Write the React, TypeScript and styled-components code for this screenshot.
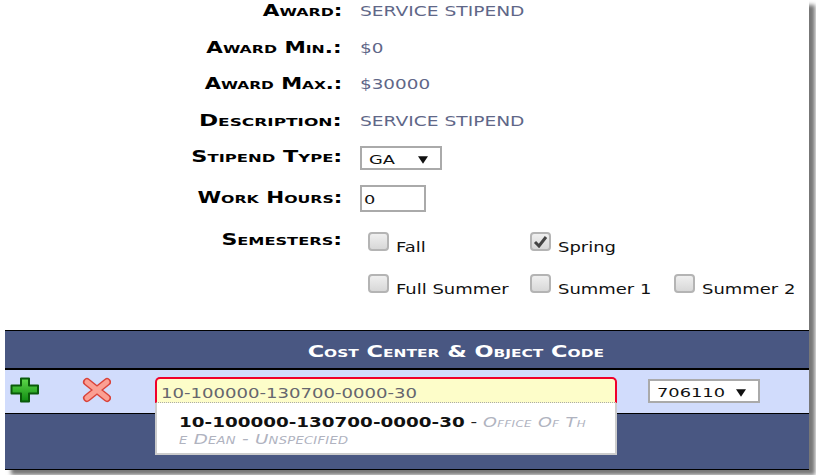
import React from "react";
import styled, { createGlobalStyle } from "styled-components";

const Global = createGlobalStyle`
  html, body { margin: 0; padding: 0; background: #fff; overflow: hidden; }
  body { width: 816px; height: 475px; font-family: "DejaVu Sans", Verdana, sans-serif; }
`;

const Page = styled.div`
  width: 816px;
  height: 475px;
  overflow: hidden;
  display: flex;
  flex-direction: column;
  background: #fff;
`;

const Sheet = styled.div`
  width: 804px;
  height: 470px;
  margin-left: 5px;
  background: #fff;
  box-shadow: 6px 5px 4px #777;
  display: flex;
  flex-direction: column;
`;

/* The reference photo is stretched horizontally, so its text is too. */
const Wide = styled.span<{ $x: number; $origin?: string }>`
  display: inline-block;
  white-space: nowrap;
  transform: scaleX(${(p) => p.$x});
  transform-origin: ${(p) => p.$origin ?? "left"} center;
`;

const Form = styled.div`
  height: 330px;
  flex: none;
  display: grid;
  grid-template-columns: 337px 1fr;
  grid-template-rows: 22px 37px 36px 36px 39px 40px auto;
  column-gap: 18px;
  align-content: start;
`;

const Label = styled.div<{ $top: number }>`
  font-size: 15px;
  font-weight: 700;
  font-variant: small-caps;
  color: #000;
  text-align: right;
  line-height: 18px;
  padding-top: ${(p) => p.$top}px;
  white-space: nowrap;
`;

const Value = styled.div<{ $top: number }>`
  font-size: 13.5px;
  color: #5f6788;
  line-height: 18px;
  padding-top: ${(p) => p.$top}px;
  white-space: nowrap;
`;

const Cell = styled.div<{ $top: number }>`
  padding-top: ${(p) => p.$top}px;
`;

const SelectBox = styled.div<{ $w: number }>`
  box-sizing: border-box;
  width: ${(p) => p.$w}px;
  height: 24px;
  border: 2px solid #aaa;
  background: #fff;
  font-size: 13px;
  line-height: 20px;
  color: #111;
  display: flex;
  align-items: center;
  justify-content: space-between;
  padding: 3px 12px 0 7px;
`;

const Arrow = styled.svg`
  width: 10px;
  height: 8px;
  flex: none;
`;

const HoursInput = styled.div`
  box-sizing: border-box;
  width: 66px;
  height: 27px;
  border: 2px solid #aaa;
  font-size: 13px;
  line-height: 25px;
  padding-left: 2px;
  color: #111;
`;

const Semesters = styled.div`
  display: grid;
  grid-template-columns: 162px 144px auto;
  grid-template-rows: 42px 30px;
  margin-left: 8px;
  padding-top: 8px;
`;

const Check = styled.label`
  display: flex;
  align-items: flex-start;
  gap: 7px;
  font-size: 13.5px;
  color: #111;
  white-space: nowrap;
`;

const Box = styled.span`
  box-sizing: border-box;
  width: 21px;
  height: 19px;
  border: 2px solid #b4b4b4;
  border-radius: 4px;
  background: linear-gradient(#efefef, #d8d8d8);
  display: flex;
  align-items: center;
  justify-content: center;
  flex: none;
`;

const CheckText = styled.span`
  line-height: 16px;
  padding-top: 7px;
`;

const Tick = styled.svg`
  width: 15px;
  height: 13px;
`;

const HeaderBar = styled.div`
  height: 40px;
  flex: none;
  box-sizing: border-box;
  background: #495782;
  border-top: 1px solid #000;
  border-bottom: 2px solid #000;
  color: #fff;
  font-weight: 700;
  font-variant: small-caps;
  font-size: 16px;
  text-align: center;
  line-height: 41px;
  padding-left: 98px;
`;

const Row = styled.div`
  height: 44px;
  flex: none;
  box-sizing: border-box;
  background: #d1dcfc;
  border-bottom: 1px solid #000;
  display: flex;
  align-items: flex-start;
`;

const IconSlot = styled.div<{ $w: number; $left: number }>`
  width: ${(p) => p.$w}px;
  margin-left: ${(p) => p.$left}px;
  padding-top: 7px;
  flex: none;
  display: flex;
`;

const ComboWrap = styled.div`
  position: relative;
  margin-left: 44px;
  margin-top: 7px;
  width: 462px;
  flex: none;
`;

const ComboInput = styled.div`
  box-sizing: border-box;
  height: 26px;
  background: #fdfdc9;
  border: 2px solid #f0002a;
  border-bottom: 1px dotted #aaa;
  border-radius: 5px 5px 0 0;
  font-size: 14px;
  line-height: 24px;
  padding: 2px 0 0 4px;
  color: #66666e;
  white-space: nowrap;
`;

const Dropdown = styled.div`
  position: absolute;
  left: 0;
  top: 26px;
  box-sizing: border-box;
  width: 462px;
  height: 52px;
  background: #fff;
  border: 2px solid #ccc;
  border-top: 0;
  padding: 11px 22px 0;
  z-index: 2;
  display: flex;
  flex-direction: column;
  align-items: flex-start;
`;

const DropLine = styled(Wide)`
  line-height: 17px;
  font-size: 14px;
  color: #222;
`;

const Code = styled.span`
  font-weight: 700;
  color: #111;
`;

const Hint = styled.span<{ $size: number; $ls: number }>`
  font-style: italic;
  font-variant: small-caps;
  font-size: ${(p) => p.$size}px;
  letter-spacing: ${(p) => p.$ls}px;
  color: #b0b3bf;
`;

const SelectSlot = styled.div`
  margin-left: 31px;
  margin-top: 9px;
`;

const Footer = styled.div`
  flex: 1;
  box-sizing: border-box;
  background: #495782;
  border-bottom: 1px solid #000;
`;

const DownArrow = () => (
  <Arrow viewBox="0 0 11 8">
    <path d="M0 0h11L5.5 8z" fill="#111" />
  </Arrow>
);

const Plus = () => (
  <svg width="30" height="26" viewBox="0 0 30 26">
    <defs>
      <linearGradient id="g" x1="0" y1="0" x2="0" y2="1">
        <stop offset="0" stopColor="#5fd84a" />
        <stop offset="1" stopColor="#0e8a10" />
      </linearGradient>
    </defs>
    <path
      d="M11 1.5h8v7h9v8h-9v8h-8v-8H1.5v-8H11z"
      fill="url(#g)"
      stroke="#0a5a0a"
      strokeWidth="2"
      strokeLinejoin="round"
    />
  </svg>
);

const Cross = () => (
  <svg width="30" height="26" viewBox="0 0 30 26">
    <path d="M6 5l20 16M26 5L6 21" stroke="#d9433a" strokeWidth="8" strokeLinecap="round" />
    <path d="M6 5l20 16M26 5L6 21" stroke="#fb9f93" strokeWidth="5" strokeLinecap="round" />
  </svg>
);

const CheckItem = ({ label, checked }: { label: string; checked?: boolean }) => (
  <Check>
    <Box>
      {checked && (
        <Tick viewBox="0 0 15 13">
          <path d="M2 7l4 4 7-9" fill="none" stroke="#444" strokeWidth="3" />
        </Tick>
      )}
    </Box>
    <CheckText>
      <Wide $x={1.33}>{label}</Wide>
    </CheckText>
  </Check>
);

const LabelText = ({ x, children }: { x: number; children: React.ReactNode }) => (
  <Wide $x={x} $origin="right">
    {children}
  </Wide>
);

export default function App() {
  return (
    <Page>
      <Global />
      <Sheet>
        <Form>
          <Label $top={2}><LabelText x={1.436}>Award:</LabelText></Label>
          <Value $top={2}><Wide $x={1.38}>SERVICE STIPEND</Wide></Value>
          <Label $top={17}><LabelText x={1.43}>Award Min.:</LabelText></Label>
          <Value $top={17}><Wide $x={1.36}>$0</Wide></Value>
          <Label $top={16}><LabelText x={1.4}>Award Max.:</LabelText></Label>
          <Value $top={16}><Wide $x={1.36}>$30000</Wide></Value>
          <Label $top={17}><LabelText x={1.54}>Description:</LabelText></Label>
          <Value $top={17}><Wide $x={1.38}>SERVICE STIPEND</Wide></Value>
          <Label $top={17}><LabelText x={1.49}>Stipend Type:</LabelText></Label>
          <Cell $top={15}>
            <SelectBox $w={82}>
              <Wide $x={1.37}>GA</Wide>
              <DownArrow />
            </SelectBox>
          </Cell>
          <Label $top={19}><LabelText x={1.43}>Work Hours:</LabelText></Label>
          <Cell $top={15}>
            <HoursInput><Wide $x={1.37}>0</Wide></HoursInput>
          </Cell>
          <Label $top={21}><LabelText x={1.47}>Semesters:</LabelText></Label>
          <Cell $top={14}>
            <Semesters>
              <CheckItem label="Fall" />
              <CheckItem label="Spring" checked />
              <span />
              <CheckItem label="Full Summer" />
              <CheckItem label="Summer 1" />
              <CheckItem label="Summer 2" />
            </Semesters>
          </Cell>
        </Form>
        <HeaderBar>
          <Wide $x={1.4} $origin="center">Cost Center &amp; Object Code</Wide>
        </HeaderBar>
        <Row>
          <IconSlot $w={30} $left={5}>
            <Plus />
          </IconSlot>
          <IconSlot $w={30} $left={41}>
            <Cross />
          </IconSlot>
          <ComboWrap>
            <ComboInput><Wide $x={1.29}>10-100000-130700-0000-30</Wide></ComboInput>
            <Dropdown>
              <DropLine $x={1.31}>
                <Code>10-100000-130700-0000-30</Code> - <Hint $size={13.5} $ls={0.3}>Office Of Th</Hint>
              </DropLine>
              <DropLine $x={1.31}>
                <Hint $size={14} $ls={0.2}>e Dean - Unspecified</Hint>
              </DropLine>
            </Dropdown>
          </ComboWrap>
          <SelectSlot>
            <SelectBox $w={112}>
              <Wide $x={1.37}>706110</Wide>
              <DownArrow />
            </SelectBox>
          </SelectSlot>
        </Row>
        <Footer />
      </Sheet>
    </Page>
  );
}
